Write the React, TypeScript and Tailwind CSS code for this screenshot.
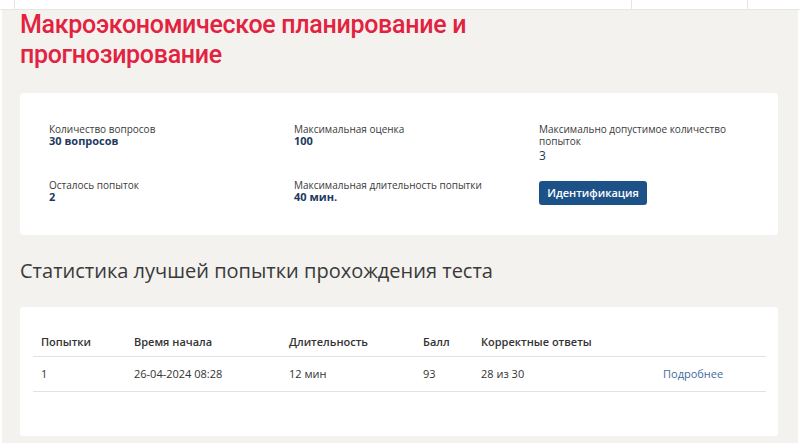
const label = "text-[10px] leading-[12px] text-[#3a3a3a]";
const value = "text-[11px] leading-[12px] font-bold text-[#22395f]";
const th = "pb-[7px] text-left text-[11px] leading-[14px] font-semibold text-[#333]";
const td = "py-[10px] text-[11px] leading-[14px]";

function Stat({ title, val }: { title: string; val: string }) {
  return (
    <div>
      <div className={label}>{title}</div>
      <div className={value}>{val}</div>
    </div>
  );
}

export default function App() {
  return (
    <div className="h-[447px] w-[800px] overflow-hidden bg-white" style={{ fontFamily: '"Open Sans", "Noto Sans", sans-serif' }}>
      {/* top nav remnant */}
      <div className="flex h-[10px] border-b border-[#e6e5e2]">
        <div className="w-[15px] border-r border-[#e6e5e2]" />
        <div className="w-[617px] border-r border-[#e6e5e2]" />
        <div className="w-[116px] border-r border-[#e6e5e2]" />
        <div className="flex-1" />
      </div>

      <div className="mx-[2px] h-[433px] bg-[#f3f2ef] px-[18px]">
        <h1
          className="w-[470px] text-[25px] leading-[30px] font-medium tracking-[-0.3px] text-[#e2223f]"
          style={{ fontFamily: 'Roboto, "Liberation Sans", sans-serif' }}
        >
          Макроэкономическое планирование и прогнозирование
        </h1>

        <div className="mt-[23px] w-[758px] rounded-[3px] bg-white pt-[30px] pb-[30px] pl-[29px] shadow-[0_0_1px_rgba(0,0,0,0.06)]">
          <div className="grid grid-cols-[245px_245px_210px] gap-y-[17px]">
            <Stat title="Количество вопросов" val="30 вопросов" />
            <Stat title="Максимальная оценка" val="100" />
            <div>
              <div className={label}>Максимально допустимое количество попыток</div>
              <div className="mt-[2px] text-[12px] leading-[13px] text-[#22395f]">3</div>
            </div>
            <Stat title="Осталось попыток" val="2" />
            <Stat title="Максимальная длительность попытки" val="40 мин." />
            <div>
              <button className="h-[24px] w-[108px] rounded-[3px] bg-[#1c5287] text-[11px] font-semibold text-white">
                Идентификация
              </button>
            </div>
          </div>
        </div>

        <h2 className="mt-[23px] text-[20px] leading-[26px] text-[#3a3a3a]">
          Статистика лучшей попытки прохождения теста
        </h2>

        <div className="mt-[23px] w-[758px] rounded-[3px] bg-white px-[13px] pt-[28px] pb-[44px]">
          <table className="w-[733px] table-fixed border-collapse">
            <thead>
              <tr className="border-b border-[#e2e2e2]">
                <th className={`${th} w-[101px] pl-[8px]`}>Попытки</th>
                <th className={`${th} w-[155px]`}>Время начала</th>
                <th className={`${th} w-[134px]`}>Длительность</th>
                <th className={`${th} w-[58px]`}>Балл</th>
                <th className={`${th} w-[182px]`}>Корректные ответы</th>
                <th className={th}></th>
              </tr>
            </thead>
            <tbody>
              <tr className="border-b border-[#e2e2e2]">
                <td className={`${td} pl-[8px] text-[#333]`}>1</td>
                <td className={`${td} text-[#333]`}>26-04-2024 08:28</td>
                <td className={`${td} text-[#333]`}>12 мин</td>
                <td className={`${td} text-[#333]`}>93</td>
                <td className={`${td} text-[#333]`}>28 из 30</td>
                <td className={`${td} text-[#3f6c9e]`}>Подробнее</td>
              </tr>
            </tbody>
          </table>
        </div>
      </div>
    </div>
  );
}
